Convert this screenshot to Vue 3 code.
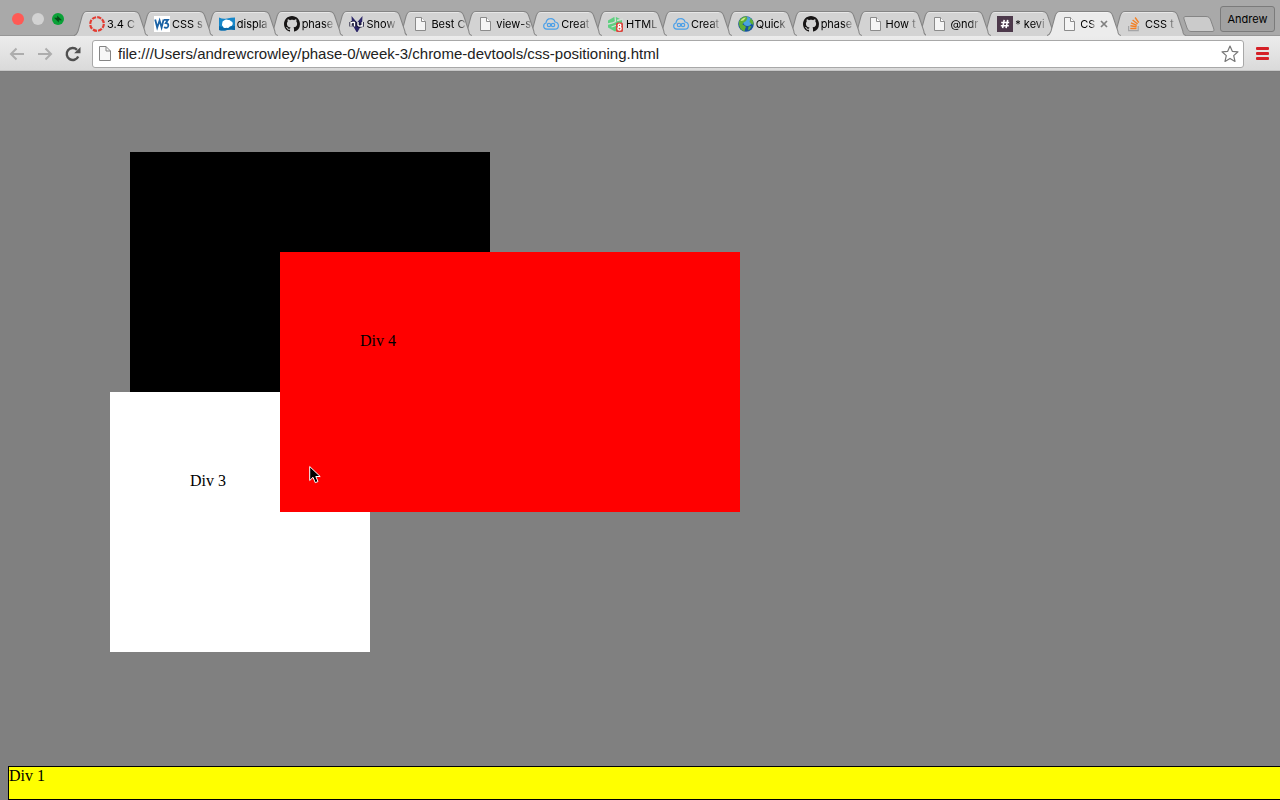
<script setup>
import { ref } from 'vue'

const tabs = [
  { icon: 'ring', title: '3.4 C' },
  { icon: 'w3', title: 'CSS s' },
  { icon: 'wave', title: 'displa' },
  { icon: 'github', title: 'phase' },
  { icon: 'nu', title: 'Show' },
  { icon: 'doc', title: 'Best C' },
  { icon: 'doc', title: 'view-s' },
  { icon: 'cloud', title: 'Creat' },
  { icon: 'treehouse', title: 'HTML' },
  { icon: 'cloud', title: 'Creat' },
  { icon: 'globe', title: 'Quick' },
  { icon: 'github', title: 'phase' },
  { icon: 'doc', title: 'How t' },
  { icon: 'doc', title: '@ndr' },
  { icon: 'hash', title: '* kevi' },
  { icon: 'doc', title: 'CS', active: true },
  { icon: 'stack', title: 'CSS t' },
]
const address = ref('file:///Users/andrewcrowley/phase-0/week-3/chrome-devtools/css-positioning.html')
</script>

<template>
  <div class="browser">
    <header class="strip">
      <div class="lights">
        <button class="light close" aria-label="Close window"></button>
        <button class="light minimise" aria-label="Minimise window"></button>
        <button class="light zoom" aria-label="Full screen">
          <svg width="12" height="12" viewBox="0 0 12 12"><path d="M5.2 2.6 10 7.2H5.2ZM6.8 9.4 2 4.8H6.8Z" fill="#064d18" /></svg>
        </button>
      </div>
      <nav class="tabs" aria-label="Tabs">
        <button
          v-for="(tab, i) in tabs"
          :key="i"
          class="tab"
          :class="{ active: tab.active }"
          :style="{ zIndex: tab.active ? 40 : 30 - i }"
        >
          <svg class="shape" viewBox="0 0 73 25" preserveAspectRatio="none">
            <path class="fill" d="M0 25C3 24 3 22 4 20L8 5C9 2 10 .5 13 .5H60C63 .5 64 2 65 5L70 20C70 22 71 24 73 25Z" />
            <path class="edge" d="M0 24.5C3 24 3 22 4 20L8 5C9 2 10 .5 13 .5H60C63 .5 64 2 65 5L70 20C70 22 71 24 73 24.5" />
            <path d="M10 2.5C11 1.5 12 1.5 13 1.5H60" fill="none" stroke="#fff" stroke-opacity=".45" />
          </svg>
          <span class="icon">
            <svg v-if="tab.icon === 'ring'" width="16" height="16" viewBox="0 0 16 16">
              <circle cx="8" cy="8" r="6.8" fill="none" stroke="#e33c32" stroke-width="2.2" stroke-dasharray="4.2 1.14" />
            </svg>
            <svg v-else-if="tab.icon === 'w3'" width="16" height="16" viewBox="0 0 16 16">
              <rect width="16" height="16" fill="#fff" />
              <path d="M1.2 3.5 3.2 11.5 5.6 4.5 7.6 11.5 9.6 3.5M10 3.8H14L11.8 7C14.2 7.2 14.8 9 14 10.6 13.2 12 11.4 12.2 10.2 11" fill="none" stroke="#1a62a5" stroke-width="1.8" />
            </svg>
            <svg v-else-if="tab.icon === 'wave'" width="16" height="16" viewBox="0 0 16 16">
              <path d="M0 1.5Q4 3.5 8 2.5T16 1.5V14Q12 13 8 14T0 14Z" fill="#1787c9" />
              <path d="M0 10Q4 12 8 11T16 10V14Q12 13 8 14T0 14Z" fill="#0868a8" />
              <path d="M5 4.6Q7 2.6 9.2 4 11 3.6 11.6 5 14 5.4 13.8 8 13.4 10.4 10.8 10.4 9.6 12.4 7.2 11.8 4.4 12.6 4 10.4 2.2 9.4 3.2 7.4 3 5.4 5 4.6Z" fill="#fff" />
            </svg>
            <svg v-else-if="tab.icon === 'github'" width="16" height="16" viewBox="0 0 16 16">
              <path fill="#171515" d="M8 0C3.58 0 0 3.58 0 8c0 3.54 2.29 6.53 5.47 7.59.4.07.55-.17.55-.38v-1.49c-2.01.37-2.53-.49-2.69-.94-.09-.23-.48-.94-.82-1.13-.28-.15-.68-.52-.01-.53.63-.01 1.08.58 1.23.82.72 1.21 1.87.87 2.33.66.07-.52.28-.87.51-1.07-1.78-.2-3.64-.89-3.64-3.95 0-.87.31-1.59.82-2.15-.08-.2-.36-1.02.08-2.12 0 0 .67-.21 2.2.82.64-.18 1.32-.27 2-.27s1.36.09 2 .27c1.53-1.04 2.2-.82 2.2-.82.44 1.1.16 1.92.08 2.12.51.56.82 1.27.82 2.15 0 3.07-1.87 3.75-3.65 3.95.29.25.54.73.54 1.48v2.2c0 .21.15.46.55.38A8 8 0 0 0 16 8c0-4.42-3.58-8-8-8Z" />
            </svg>
            <svg v-else-if="tab.icon === 'nu'" width="16" height="16" viewBox="0 0 16 16">
              <path d="M2.5 0 8 6.5 13.5 0 13 8 8.5 16H7.5L3 8Z" fill="#2b2568" />
              <path d="M2 10.5V6M2 7.5Q3 5.8 5.5 6.5V10.5M9 6v3.2q1.2 1.6 4 .3M13.2 6v4.8" fill="none" stroke="#151333" stroke-width="3.2" />
              <path d="M2 10.5V6M2 7.5Q3 5.8 5.5 6.5V10.5M9 6v3.2q1.2 1.6 4 .3M13.2 6v4.8" fill="none" stroke="#fff" stroke-width="1.4" />
            </svg>
            <svg v-else-if="tab.icon === 'cloud'" width="16" height="16" viewBox="0 0 16 16">
              <path d="M4 13.2Q.7 13 .7 10 .7 7.5 3 7 3.5 2.8 7.5 2.7 11 2.5 12 6 15.4 6.5 15.4 9.7 15.3 13 12 13.2Z" fill="none" stroke="#4a9fe8" stroke-width="1.2" />
              <circle cx="6" cy="9" r="1.7" fill="none" stroke="#4a9fe8" stroke-width="1.2" />
              <circle cx="10" cy="9" r="1.7" fill="none" stroke="#4a9fe8" stroke-width="1.2" />
            </svg>
            <svg v-else-if="tab.icon === 'treehouse'" width="16" height="16" viewBox="0 0 16 16">
              <path d="M7 .5 14 4V11L7 15.5 0 11.5V4.5Z" fill="#5fcf80" />
              <path d="M0 8 4.5 7 7.5 5.5 7 0M3.5 11 9 9" fill="none" stroke="#d6dfd8" stroke-width="1.3" />
              <path d="M9 4.5 15 3" fill="none" stroke="#d6dfd8" stroke-width="1.5" />
              <rect x="8" y="6.5" width="7" height="9.5" rx="1.5" fill="#d9453d" />
              <circle cx="11.5" cy="9.4" r="1.3" fill="none" stroke="#fff" stroke-width="1.3" />
              <circle cx="11.5" cy="12.6" r="1.6" fill="none" stroke="#fff" stroke-width="1.3" />
            </svg>
            <svg v-else-if="tab.icon === 'globe'" width="16" height="16" viewBox="0 0 16 16">
              <circle cx="8" cy="8" r="7.8" fill="#1553a0" />
              <circle cx="9.5" cy="5.5" r="4.5" fill="#4aa3e0" />
              <path d="M.8 6Q2.5 .8 8 .2L9.5 2 8 5 5.5 6.5 4.5 8.5 6.5 9.5 8 11 7 13 6.5 15.5Q.5 13.5 .8 6ZM12.5 2 15 5 15.6 9 13.5 8 11.5 6ZM10.5 10.5 13.5 10 12 13 10 14.5Z" fill="#5faf35" />
              <path d="M2.5 5Q4 1.5 8 1.5L5.5 4.5Z" fill="#c9e88d" />
            </svg>
            <svg v-else-if="tab.icon === 'hash'" width="16" height="16" viewBox="0 0 16 16">
              <rect width="16" height="16" fill="#4d394b" />
              <path d="M7.2 3.8 5.6 12.2M10.7 3.8 9.1 12.2M4.2 6.5h8M3.8 9.7h8" fill="none" stroke="#fff" stroke-width="1.6" />
            </svg>
            <svg v-else-if="tab.icon === 'stack'" width="16" height="16" viewBox="0 0 16 16">
              <path d="M1.6 10v4.6h9.6V10" fill="none" stroke="#a4a5a7" stroke-width="1.2" />
              <path d="M3.3 12.5h6.2M3.4 9.7l6.2 1M4 6.9l5.8 2.4M5.6 4l5 4M8.1 1.5l3.6 5.2" fill="none" stroke="#f48024" stroke-width="1.4" />
            </svg>
            <svg v-else width="16" height="16" viewBox="0 0 16 16">
              <path d="M2.5 1.5H8.5L12.5 5.5V14.5H2.5Z" fill="#f5f5f5" stroke="#8b8b8b" />
              <path d="M8.5 1.5V5.5H12.5" fill="#fff" stroke="#8b8b8b" />
            </svg>
          </span>
          <span class="label">{{ tab.title }}</span>
          <svg v-if="tab.active" class="cross" width="8" height="8" viewBox="0 0 8 8"><path d="M1 1 7 7M7 1 1 7" stroke="#808080" stroke-width="1.7" /></svg>
        </button>
      </nav>
      <button class="newtab" aria-label="New tab">
        <svg width="32" height="16" viewBox="0 0 32 16"><path d="M3 .5H23C26 .5 27 2 28 5L30.5 12C31.5 15 31 15.5 29 15.5H8C6 15.5 5 14 4 12L1 3C.5 1 1 .5 3 .5Z" fill="#cbcbcb" stroke="#858585" /></svg>
      </button>
      <button class="user">Andrew</button>
    </header>

    <div class="toolbar">
      <button class="tool" aria-label="Back">
        <svg width="16" height="14" viewBox="0 0 16 14"><path d="M15 7H2M7.5 1.5 2 7 7.5 12.5" fill="none" stroke="#adadad" stroke-width="2" /></svg>
      </button>
      <button class="tool" aria-label="Forward">
        <svg width="16" height="14" viewBox="0 0 16 14"><path d="M1 7H14M8.5 1.5 14 7 8.5 12.5" fill="none" stroke="#adadad" stroke-width="2" /></svg>
      </button>
      <button class="tool" aria-label="Reload">
        <svg width="16" height="16" viewBox="0 0 16 16"><path d="M13.2 10.5A6 6 0 1 1 12 3.8" fill="none" stroke="#505050" stroke-width="2.4" /><path d="M15.5 1V7.2H9.2Z" fill="#505050" /></svg>
      </button>
      <div class="omnibox">
        <svg width="12" height="16" viewBox="0 0 12 16"><path d="M.5 .5H7L11.5 5V14.5H.5Z" fill="#f7f7f7" stroke="#858585" /><path d="M7 .5V5H11.5" fill="none" stroke="#858585" /></svg>
        <input v-model="address" aria-label="Address" spellcheck="false" />
        <button class="star" aria-label="Bookmark this page">
          <svg width="18" height="18" viewBox="0 0 18 18"><path d="M9 1 11.3 6.3 17 6.8 12.7 10.6 14 16.4 9 13.4 4 16.4 5.3 10.6 1 6.8 6.7 6.3Z" fill="#fff" stroke="#777" stroke-width="1.2" stroke-linejoin="round" /></svg>
        </button>
      </div>
      <button class="menu" aria-label="Menu"><i></i><i></i><i></i></button>
    </div>

    <main class="page">
      <div class="box black"></div>
      <div class="box white">Div 3</div>
      <div class="box red">Div 4</div>
      <div class="bar">Div 1</div>
      <svg class="cursor" width="12" height="19" viewBox="0 0 12 19">
        <path d="M.7 1.5V15.5L4 12.3 6.3 17.7 9 16.5 6.8 11.5H11.2Z" fill="#000" stroke="#fff" />
      </svg>
    </main>
  </div>
</template>

<style>
body {
  margin: 0;
}
</style>

<style scoped>
.browser {
  display: flex;
  flex-direction: column;
  height: 100vh;
  overflow: hidden;
  font-family: Inter, "Liberation Sans", sans-serif;
  color: #000;
}
button {
  padding: 0;
  border: 0;
  background: none;
  font: inherit;
  color: inherit;
}
svg {
  display: block;
  flex: none;
}
.strip {
  display: flex;
  height: 36px;
  box-sizing: border-box;
  border-bottom: 1px solid #969696;
  background: #a9a9a9;
}
.lights {
  display: flex;
  flex: none;
  gap: 8px;
  width: 62px;
  padding: 13px 0 0 12px;
}
.light {
  width: 12px;
  height: 12px;
  border-radius: 50%;
  overflow: hidden;
}
.close {
  background: #ff5a55;
}
.minimise {
  background: #d2d2d2;
}
.zoom {
  background: #0aa137;
}
.tabs {
  display: flex;
  flex: 1;
  min-width: 0;
  padding-top: 11px;
}
.tab {
  position: relative;
  display: flex;
  flex: 1 1 0;
  align-items: center;
  box-sizing: border-box;
  min-width: 0;
  height: 25px;
  padding-left: 15px;
  font-size: 11px;
  text-align: left;
}
.shape {
  position: absolute;
  top: 0;
  left: 0;
  width: calc(100% + 9px);
  height: 25px;
}
.fill {
  fill: #d3d3d3;
}
.edge {
  fill: none;
  stroke: #858585;
}
.active .fill {
  fill: #ececec;
}
.icon {
  position: relative;
  flex: none;
}
.label {
  position: relative;
  flex: none;
  margin-left: 2px;
  line-height: 16px;
  white-space: nowrap;
  mask-image: linear-gradient(to right, #000 calc(100% - 9px), rgba(0, 0, 0, .25));
}
.active .label {
  mask-image: linear-gradient(to right, #000 calc(100% - 4px), rgba(0, 0, 0, .25));
}
.cross {
  position: relative;
  margin-left: 5px;
}
.newtab {
  align-self: flex-start;
  flex: none;
  margin: 16px 5px 0 6px;
}
.user {
  align-self: flex-start;
  flex: none;
  width: 55px;
  height: 26px;
  margin: 6px 5px 0 0;
  border: 1px solid #7b7b7b;
  border-radius: 3px;
  background: #a1a1a1;
  font-size: 11px;
}
.toolbar {
  display: flex;
  align-items: center;
  box-sizing: border-box;
  height: 35px;
  padding: 1px 9px 0;
  border-bottom: 1px solid #c6c6c6;
  background: linear-gradient(#ececec, #dadada);
}
.tool {
  display: flex;
  justify-content: center;
  width: 16px;
  margin-right: 12px;
}
.omnibox {
  display: flex;
  flex: 1;
  align-items: center;
  box-sizing: border-box;
  height: 28px;
  padding: 0 4px 0 6px;
  margin-left: -1px;
  border: 1px solid #a8a8a8;
  border-radius: 3px;
  background: #fff;
}
.omnibox input {
  flex: 1;
  min-width: 0;
  padding: 0;
  margin: 0 7px;
  border: 0;
  outline: 0;
  background: none;
  font: 15px/20px "Liberation Sans", sans-serif;
  color: #222;
}
.menu {
  display: flex;
  flex-direction: column;
  gap: 2px;
  width: 13px;
  margin: 0 2px 0 12px;
}
.menu i {
  height: 3px;
  border-radius: 1px;
  background: #d52027;
}
.page {
  position: relative;
  flex: 1;
  overflow: hidden;
  border-top: 1px solid #7b7b7b;
  background: #808080;
  font: 16px/18px "Liberation Serif", serif;
}
.box {
  position: absolute;
  box-sizing: border-box;
  padding: 80px;
}
.black {
  top: 80px;
  left: 130px;
  width: 360px;
  height: 240px;
  background: #000;
}
.white {
  top: 320px;
  left: 110px;
  width: 260px;
  height: 260px;
  background: #fff;
}
.red {
  top: 180px;
  left: 280px;
  width: 460px;
  height: 260px;
  background: #f00;
}
.bar {
  position: absolute;
  right: -8px;
  bottom: 0;
  left: 8px;
  box-sizing: border-box;
  height: 34px;
  border: 1px solid #000;
  background: #ff0;
}
.cursor {
  position: absolute;
  top: 393px;
  left: 309px;
}
</style>
